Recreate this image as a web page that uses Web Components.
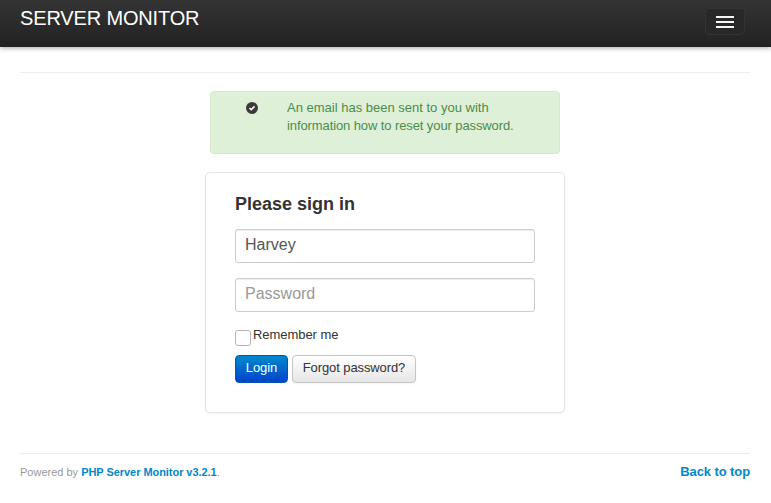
<!DOCTYPE html>
<html>
<head>
<meta charset="utf-8">
<title>Server Monitor</title>
<style>
    html, body { margin: 0; height: 100%; }
    body {
        background: #fff;
        color: #333;
        font: 13px/18px "Liberation Sans", Arial, sans-serif;
        overflow: hidden;
    }
    .tight { letter-spacing: -0.1px; }
</style>
</head>
<body>
<app-navbar>SERVER MONITOR</app-navbar>
<page-main>
    <alert-box>An email has been sent to you with<br><span class="tight">information how to reset your password.</span></alert-box>
    <login-form heading="Please sign in" username="Harvey"></login-form>
</page-main>
<app-footer></app-footer>

<script>
class AppNavbar extends HTMLElement {
    connectedCallback() {
        this.attachShadow({ mode: 'open' });
        this.shadowRoot.innerHTML = `
            <style>
                :host {
                    display: flex;
                    justify-content: space-between;
                    align-items: flex-start;
                    height: 47px;
                    box-sizing: border-box;
                    padding: 8px 26px 0 20px;
                    background: linear-gradient(to bottom, #343434, #222);
                    box-shadow: 0 1px 5px rgba(0,0,0,0.35);
                    position: relative;
                }
                .brand {
                    color: #fff;
                    font-size: 20px;
                    line-height: 20px;
                    letter-spacing: -0.15px;
                }
                button {
                    width: 40px;
                    height: 27px;
                    padding: 0;
                    display: flex;
                    flex-direction: column;
                    align-items: center;
                    justify-content: center;
                    gap: 3px;
                    background: #282828;
                    border: 1px solid #333;
                    border-radius: 4px;
                }
                button span {
                    display: block;
                    width: 18px;
                    height: 2px;
                    background: #f5f5f5;
                }
            </style>
            <div class="brand"><slot></slot></div>
            <button aria-label="Toggle navigation"><span></span><span></span><span></span></button>
        `;
    }
}
customElements.define('app-navbar', AppNavbar);

class PageMain extends HTMLElement {
    connectedCallback() {
        this.attachShadow({ mode: 'open' });
        this.shadowRoot.innerHTML = `
            <style>
                :host {
                    display: flex;
                    flex-direction: column;
                    align-items: center;
                    margin: 25px 21px 0 20px;
                    padding-top: 18px;
                    padding-bottom: 40px;
                    border-top: 1px solid #eee;
                    gap: 18px;
                }
            </style>
            <slot></slot>
        `;
    }
}
customElements.define('page-main', PageMain);

class AlertBox extends HTMLElement {
    connectedCallback() {
        this.attachShadow({ mode: 'open' });
        this.shadowRoot.innerHTML = `
            <style>
                :host {
                    display: flex;
                    box-sizing: border-box;
                    width: 350px;
                    height: 63px;
                    padding: 7px 14px 0 35px;
                    background: #dff0d8;
                    border: 1px solid #d6e9c6;
                    border-radius: 4px;
                    color: #4b8c4c;
                }
                svg { margin: 3px 29px 0 0; flex: none; }
            </style>
            <svg width="12" height="12" viewBox="0 0 12 12">
                <circle cx="6" cy="6" r="6" fill="#3a3a3a"/>
                <path d="M3.5 6 5.2 7.7 8.5 4.4" fill="none" stroke="#fff" stroke-width="1.6"/>
            </svg>
            <div><slot></slot></div>
        `;
    }
}
customElements.define('alert-box', AlertBox);

class LoginForm extends HTMLElement {
    connectedCallback() {
        this.attachShadow({ mode: 'open' });
        const heading = this.getAttribute('heading');
        const username = this.getAttribute('username');
        this.shadowRoot.innerHTML = `
            <style>
                :host {
                    display: block;
                    box-sizing: border-box;
                    width: 360px;
                    height: 241px;
                    padding: 20px 29px 0;
                    background: #fff;
                    border: 1px solid #e5e5e5;
                    border-radius: 5px;
                    box-shadow: 0 1px 2px rgba(0,0,0,0.05);
                }
                h2 {
                    margin: 0 0 13px;
                    font-size: 18px;
                    line-height: 23px;
                    font-weight: bold;
                    color: #333;
                }
                input.text {
                    display: block;
                    box-sizing: border-box;
                    width: 300px;
                    height: 34px;
                    margin: 0 0 15px;
                    padding: 0 9px 2px;
                    font: 16px "Liberation Sans", Arial, sans-serif;
                    color: #555;
                    border: 1px solid #ccc;
                    border-radius: 3px;
                    box-shadow: inset 0 1px 1px rgba(0,0,0,0.075);
                    outline: none;
                }
                input.text::placeholder { color: #999; opacity: 1; }
                .remember {
                    display: flex;
                    align-items: flex-start;
                    height: 18px;
                    margin: -1px 0 11px;
                    color: #333;
                    letter-spacing: -0.05px;
                }
                .box {
                    box-sizing: border-box;
                    width: 16px;
                    height: 16px;
                    margin: 4px 2px 0 0;
                    background: #fff;
                    border: 1px solid #b8b4ae;
                    border-radius: 3px;
                    appearance: none;
                    flex: none;
                }
                .actions { display: flex; gap: 4px; }
                button {
                    box-sizing: border-box;
                    height: 28px;
                    padding: 0 0 3px;
                    font: 13px/18px "Liberation Sans", Arial, sans-serif;
                    white-space: nowrap;
                    border-radius: 4px;
                    border: 1px solid #bbb;
                }
                .primary {
                    width: 53px;
                    color: #fff;
                    background: linear-gradient(to bottom, #0088cc, #0044cc);
                    border-color: #0055b0;
                    letter-spacing: -0.1px;
                }
                .plain {
                    width: 124px;
                    color: #333;
                    background: linear-gradient(to bottom, #fff, #e6e6e6);
                    border-color: #c5c5c5;
                    box-shadow: 0 1px 2px rgba(0,0,0,0.05);
                    letter-spacing: -0.1px;
                }
            </style>
            <h2>${heading}</h2>
            <input class="text" type="text" value="${username}">
            <input class="text" type="password" placeholder="Password">
            <label class="remember"><input class="box" type="checkbox">Remember me</label>
            <div class="actions">
                <button class="primary">Login</button>
                <button class="plain">Forgot password?</button>
            </div>
        `;
    }
}
customElements.define('login-form', LoginForm);

class AppFooter extends HTMLElement {
    connectedCallback() {
        this.attachShadow({ mode: 'open' });
        this.shadowRoot.innerHTML = `
            <style>
                :host {
                    display: flex;
                    justify-content: space-between;
                    align-items: center;
                    margin: 0 21px 0 20px;
                    padding-top: 9px;
                    border-top: 1px solid #eee;
                    font-size: 11px;
                    color: #999;
                }
                a { color: #0088cc; font-weight: bold; text-decoration: none; letter-spacing: -0.05px; }
                .top { font-size: 13px; letter-spacing: -0.1px; }
            </style>
            <div>Powered by <a href="#">PHP Server Monitor v3.2.1</a>.</div>
            <a class="top" href="#">Back to top</a>
        `;
    }
}
customElements.define('app-footer', AppFooter);
</script>
</body>
</html>
